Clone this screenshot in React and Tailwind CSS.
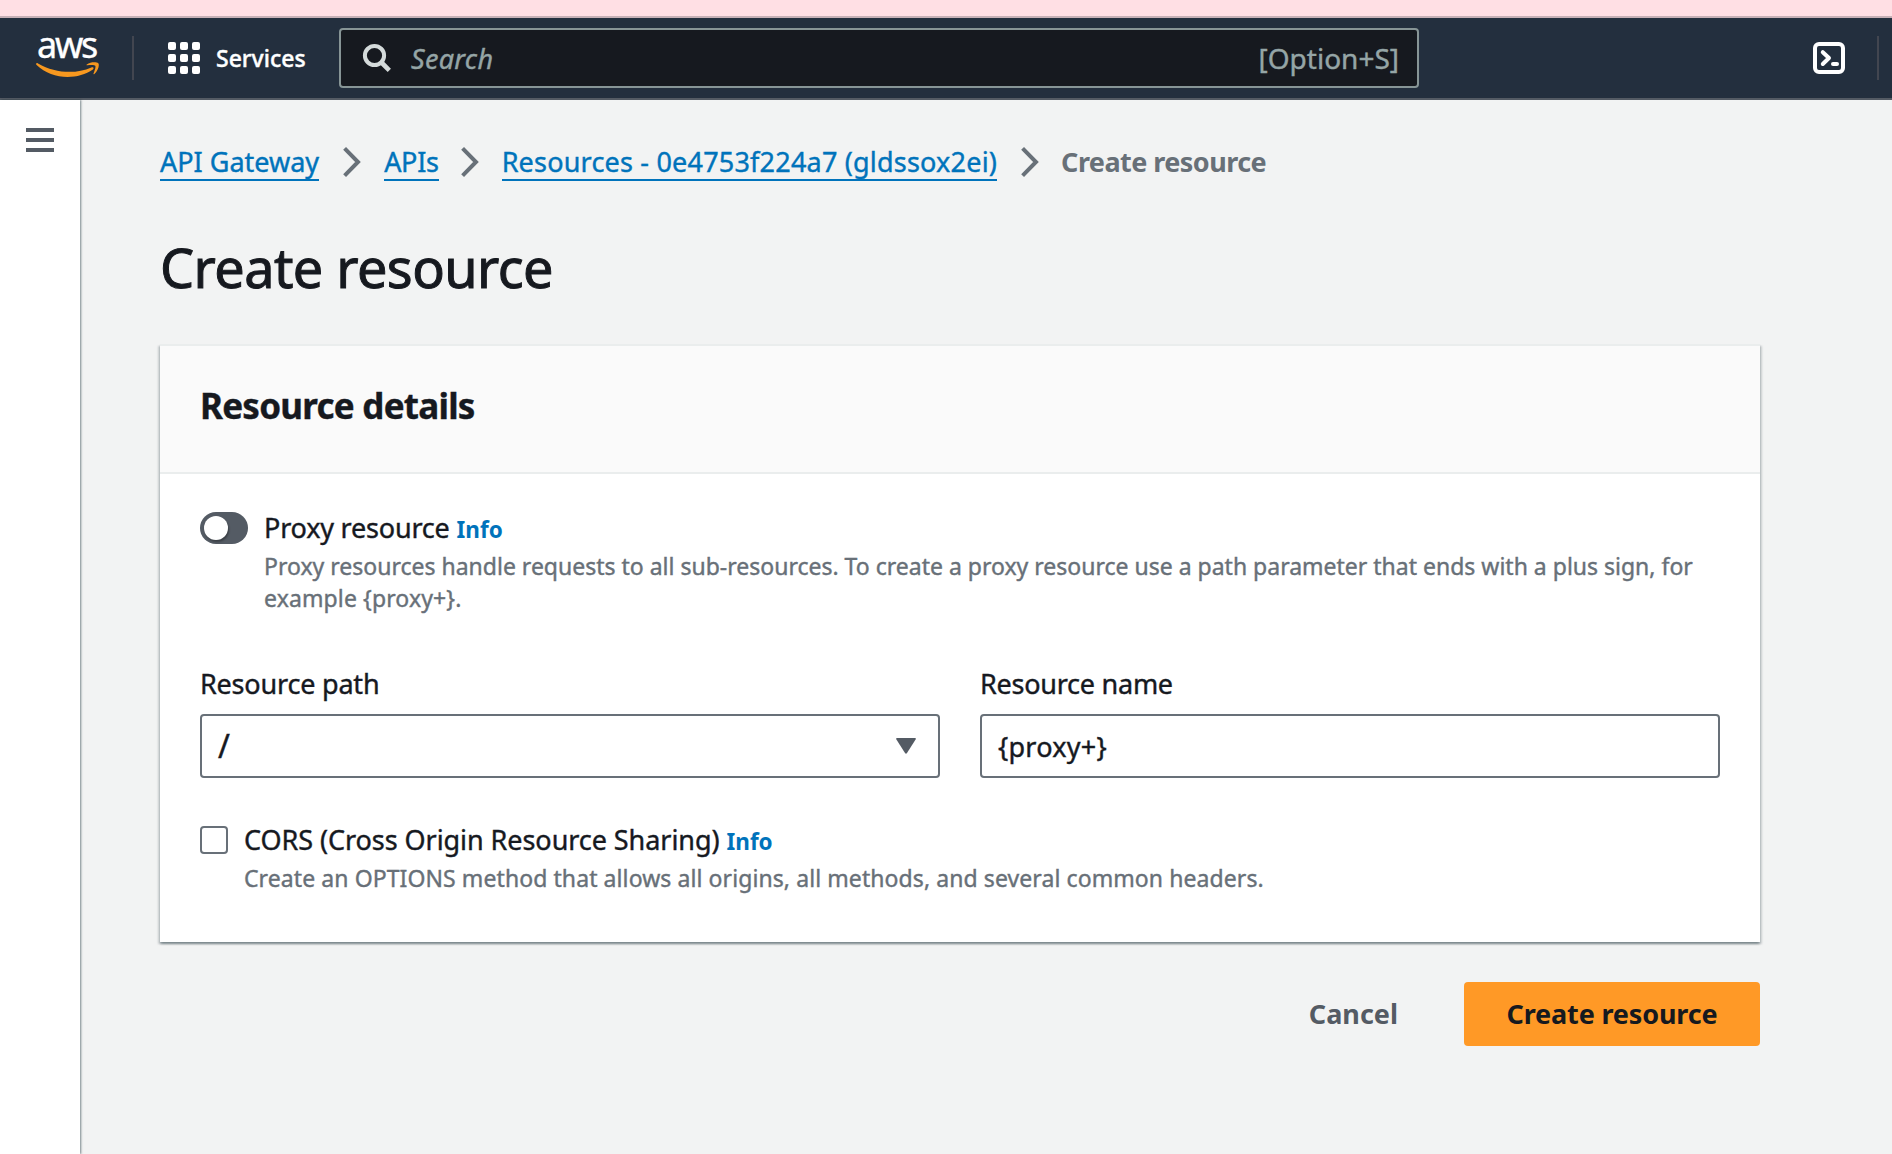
import React from "react";

function Chevron() {
  return (
    <svg width="18" height="30" viewBox="0 0 18 30" fill="none" className="shrink-0">
      <path d="M1.6 1.4 L15 15 L1.6 28.6" stroke="#687078" strokeWidth="4" />
    </svg>
  );
}

function AwsLogo() {
  return (
    <a className="flex w-[64px] flex-col pb-[2px] text-white">
      <span className="h-[26px] pl-[1px] text-[36px] leading-[18px] font-normal tracking-[-2.3px]">aws</span>
      <svg width="64" height="16" viewBox="0 0 64 16" fill="#f7981f">
        <path d="M0.2 1.6 C0.4 0.9 1.2 0.9 2 1.4 C19 11 39 12.6 55.4 5.4 C57.2 4.7 58.4 6.2 56.9 7.4 C41 18.4 15.5 17.6 0.6 2.9 C0.1 2.4 0 2 0.2 1.6 Z" />
        <path d="M50.8 2.4 C54.5 -0.2 60.6 -0.1 62.3 1.2 C63.8 2.9 62 9 58.4 12 C57.7 12.5 57.2 12.1 57.5 11.4 C58.6 8.6 60 5 59.3 3.8 C58.4 2.6 54.2 3 51.3 3.3 C50.4 3.4 50.2 2.8 50.8 2.4 Z" />
      </svg>
    </a>
  );
}

function Header() {
  return (
    <header className="flex h-[82px] shrink-0 items-center border-b-2 border-[#545b64] bg-[#232f3e] pl-[36px]">
      <AwsLogo />
      <span className="ml-[32px] h-[44px] w-[2px] bg-[#424650]" />
      <div className="ml-[34px] grid grid-cols-3 gap-1">
        {Array.from({ length: 9 }, (_, i) => (
          <span key={i} className="size-2 rounded-[2px] bg-white" />
        ))}
      </div>
      <span className="ml-[16px] w-[123px] text-[23px] leading-8 font-medium text-white">Services</span>
      <div className="flex h-[60px] w-[1080px] items-center rounded-[4px] border-2 border-[#879596] bg-[#16191f] pr-[18px] pl-[21px] text-[#95a5a6]">
        <svg width="30" height="30" viewBox="0 0 30 30" fill="none" stroke="#d5dbdb" strokeWidth="4">
          <circle cx="12.5" cy="12.5" r="9.6" />
          <path d="M19 19 L27.3 27.3" strokeWidth="4.6" />
        </svg>
        <span className="ml-[19px] pt-[2px] text-[27px] leading-9 tracking-[0.3px] italic">Search</span>
        <span className="ml-auto text-[28px] leading-9">[Option+S]</span>
      </div>
      <svg
        width="32"
        height="32"
        viewBox="0 0 32 32"
        fill="none"
        stroke="#fff"
        strokeWidth="4"
        strokeLinecap="round"
        strokeLinejoin="round"
        className="ml-[394px]"
      >
        <rect x="2" y="2" width="28" height="28" rx="4" />
        <path d="M9.8 10.2 L16 16 L9.8 22" />
        <path d="M20 22 H24" />
      </svg>
      <span className="ml-[32px] h-[44px] w-[2px] bg-[#424650]" />
    </header>
  );
}

function Crumb({ className, children }) {
  return (
    <a className={"h-[38px] border-b-2 border-[#0073bb] leading-[38px] text-[#0073bb] " + className}>{children}</a>
  );
}

function Info() {
  return (
    <a className="ml-[7px] text-[22.5px] font-bold tracking-normal text-[#0073bb] [-webkit-text-stroke:0]">
      Info
    </a>
  );
}

function Panel() {
  return (
    <section className="mt-[41px] h-[598px] w-[1600px] border-t-2 border-[#eaeded] bg-white shadow-[0_2px_2px_0_rgba(0,28,36,0.3),2px_2px_2px_0_rgba(0,28,36,0.15),-2px_2px_2px_0_rgba(0,28,36,0.15)]">
      <div className="h-[128px] border-b-2 border-[#eaeded] bg-[#fafafa] pt-[40px] pl-[40px]">
        <h2 className="text-[35px] leading-10 font-bold tracking-[-0.75px]">Resource details</h2>
      </div>
      <div className="px-[40px] pt-[36px]">
        <div className="flex">
          <span className="mt-[2px] flex h-[32px] w-[48px] shrink-0 items-center rounded-full bg-[#545b64] pl-1">
            <span className="size-6 rounded-full bg-white shadow-[1px_2px_2px_0_rgba(0,0,0,0.3)]" />
          </span>
          <div className="ml-[16px] whitespace-nowrap">
            <div className="leading-9 tracking-[-0.2px]">
              Proxy resource
              <Info />
            </div>
            <p className="mt-[2px] text-[23px] leading-8 text-[#687078]">
              Proxy resources handle requests to all sub-resources. To create a proxy resource use a path parameter that ends with a plus sign, for
              <br />
              <span className="tracking-[0.12px]">example {"{proxy+}"}.</span>
            </p>
          </div>
        </div>
        <div className="mt-[52px] grid grid-cols-2 gap-[40px]">
          <div>
            <label className="block leading-9 tracking-[-0.2px]">Resource path</label>
            <div className="mt-[12px] flex h-[64px] items-center justify-between rounded-[4px] border-2 border-[#687078] pr-[22px] pl-[16px]">
              <span className="text-[32px] leading-9">/</span>
              <svg width="20" height="16" viewBox="0 0 20 16" fill="#545b64">
                <path d="M1 0 H19 Q20.4 0 19.6 1.4 L11 15 Q10 16.4 9 15 L0.4 1.4 Q-0.4 0 1 0 Z" />
              </svg>
            </div>
          </div>
          <div>
            <label className="block leading-9 tracking-[-0.25px]">Resource name</label>
            <div className="mt-[12px] flex h-[64px] items-center rounded-[4px] border-2 border-[#687078] pt-px pl-[16px]">
              <span className="leading-9 tracking-[0.25px]">{"{proxy+}"}</span>
            </div>
          </div>
        </div>
        <div className="mt-[44px] flex">
          <span className="mt-[4px] size-7 shrink-0 rounded-[4px] border-2 border-[#687078]" />
          <div className="ml-[16px] whitespace-nowrap">
            <div className="leading-9 tracking-[-0.06px]">
              CORS (Cross Origin Resource Sharing)
              <Info />
            </div>
            <p className="mt-[2px] text-[23px] leading-8 tracking-[0.085px] text-[#687078]">
              Create an OPTIONS method that allows all origins, all methods, and several common headers.
            </p>
          </div>
        </div>
      </div>
    </section>
  );
}

export default function App() {
  return (
    <div className="flex h-[1154px] w-[1892px] flex-col overflow-hidden bg-[#f2f3f3] font-['Noto_Sans',sans-serif] text-[27px] text-[#16191f] [-webkit-text-stroke:0.4px]">
      <div className="h-[18px] shrink-0 border-b-2 border-[#c6b0b6] bg-[#ffdfe4]" />
      <Header />
      <div className="flex flex-1">
        <aside className="w-[80px] shrink-0 bg-white pt-[28px] pl-[26px] shadow-[1px_0_2px_0_rgba(0,28,36,0.5)]">
          <div className="flex w-[28px] flex-col gap-[6px]">
            <span className="h-1 bg-[#545b64]" />
            <span className="h-1 bg-[#545b64]" />
            <span className="h-1 bg-[#545b64]" />
          </div>
        </aside>
        <main className="w-[1680px] pt-[43px] pl-[80px]">
          <nav className="flex h-[38px] items-center whitespace-nowrap">
            <Crumb className="mr-[24px]">API Gateway</Crumb>
            <Chevron />
            <Crumb className="mr-[22px] ml-[23px] tracking-[-0.3px]">APIs</Crumb>
            <Chevron />
            <Crumb className="mr-[24px] ml-[23px] tracking-[0.2px]">Resources - 0e4753f224a7 (gldssox2ei)</Crumb>
            <Chevron />
            <span className="ml-[22px] leading-9 font-bold tracking-[-0.55px] text-[#687078] [-webkit-text-stroke:0]">
              Create resource
            </span>
          </nav>
          <h1 className="mt-[50px] text-[54px] leading-[72px] tracking-[-0.55px] [-webkit-text-stroke:1px]">Create resource</h1>
          <Panel />
          <div className="mt-[40px] flex h-[64px] items-center justify-end font-bold [-webkit-text-stroke:0]">
            <button className="mr-[66px] text-[#545b64]">Cancel</button>
            <button className="h-[64px] w-[296px] rounded-[4px] bg-[#ff9926] tracking-[-0.15px]">Create resource</button>
          </div>
        </main>
      </div>
    </div>
  );
}
